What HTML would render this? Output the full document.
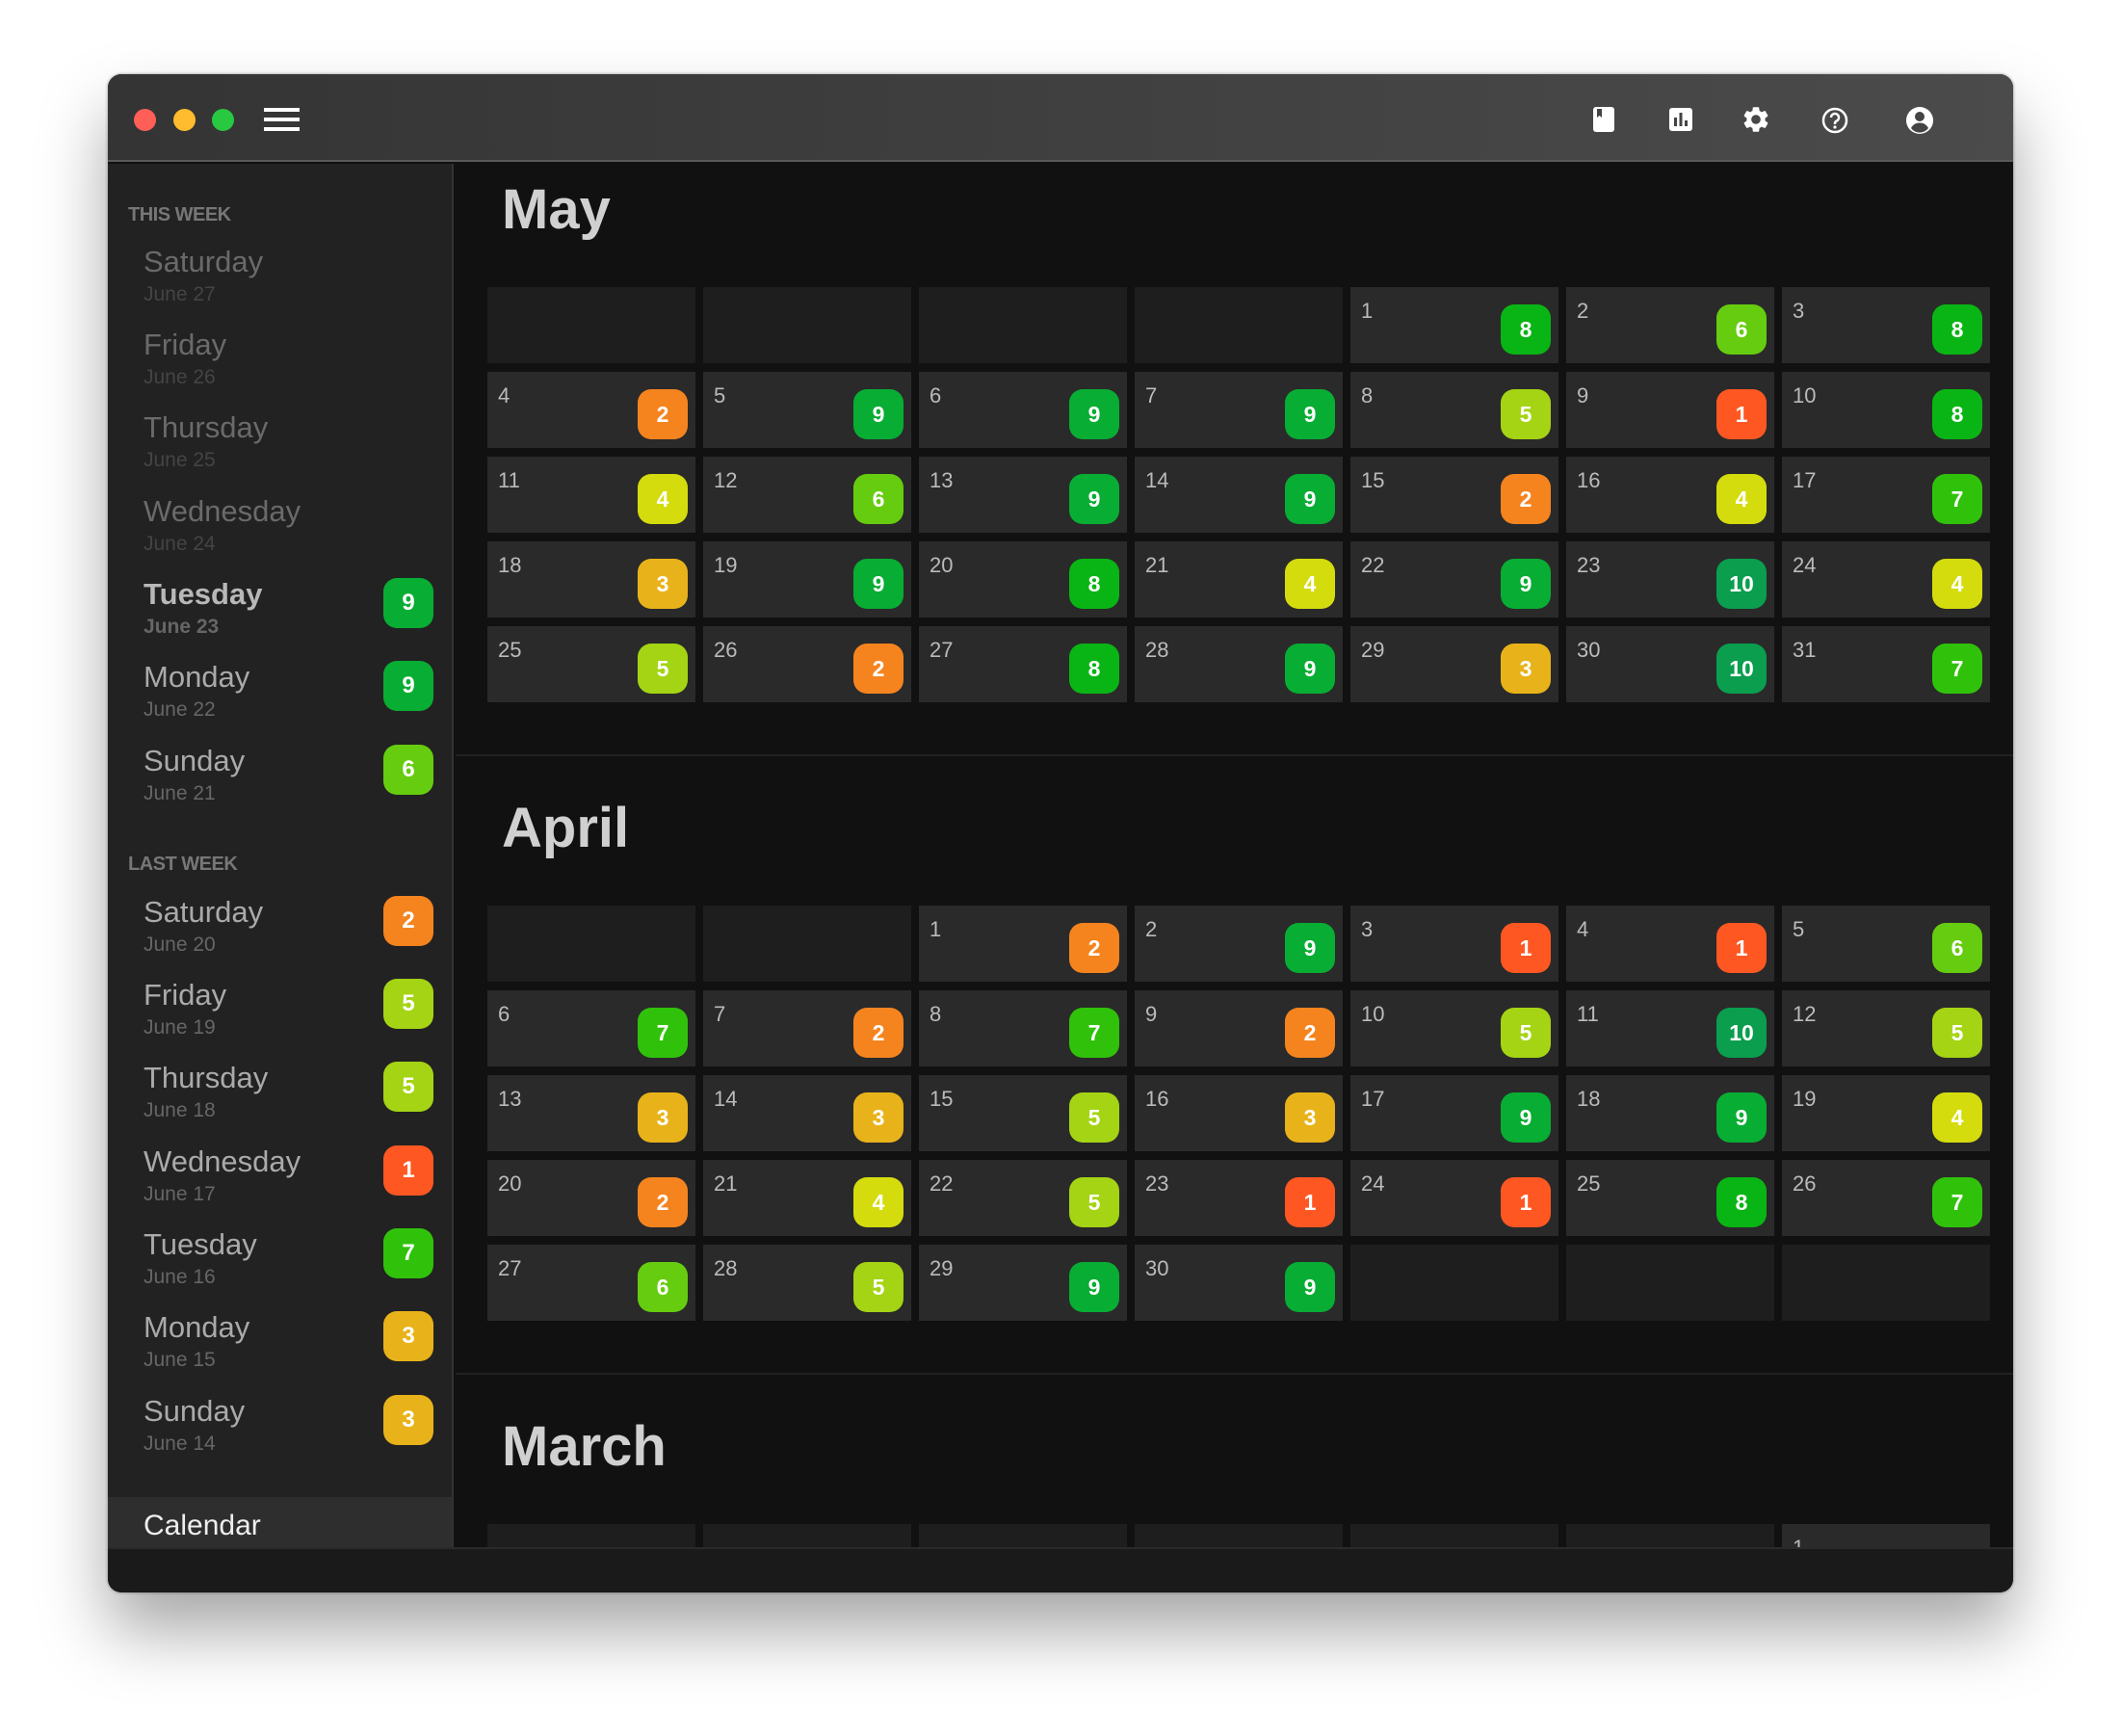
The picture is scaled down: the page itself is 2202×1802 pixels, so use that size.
<!DOCTYPE html>
<html><head><meta charset="utf-8"><style>
*{margin:0;padding:0;box-sizing:border-box}
body{width:2202px;height:1802px;background:#fff;position:relative;overflow:hidden;font-family:"Liberation Sans",sans-serif}
.win{position:absolute;left:112px;top:77px;width:1978px;height:1576px;border-radius:14px;overflow:hidden;background:#111;box-shadow:0 40px 70px rgba(0,0,0,.35),0 0 3px rgba(0,0,0,.4)}
.tb{position:absolute;left:0;top:0;width:100%;height:91px;background:linear-gradient(90deg,#343434,#4b4b4b);border-bottom:2px solid #5a5a5a}
.dot{position:absolute;top:36px;width:23px;height:23px;border-radius:50%}
.hb{position:absolute;left:162px;width:37px;height:4px;background:#fff}
.side{position:absolute;left:0;top:93px;width:359px;height:1436px;background:#222;border-right:2px solid #333}
.lbl{position:absolute;left:21px;font-size:20px;font-weight:bold;color:#777;letter-spacing:-.5px}
.nm{position:absolute;left:37px;font-size:31px;line-height:1;color:#aaa}
.dt{position:absolute;left:37px;font-size:21px;line-height:1;color:#666}
.sb{position:absolute;left:286px;width:52px;height:52px;border-radius:14px;color:#fff;font-weight:bold;font-size:24px;display:flex;align-items:center;justify-content:center}
.cal{position:absolute;left:0;top:1477px;width:357px;height:52px;background:#2e2e2e;color:#eee;font-size:30px;padding:13px 0 0 37px}
.bot{position:absolute;left:0;top:1529px;width:100%;height:47px;background:#1a1a1a;border-top:2px solid #2a2a2a}
.mt{position:absolute;left:409px;font-size:58px;font-weight:bold;color:#d0d0d0;line-height:1}
.hr{position:absolute;left:361px;right:0;height:2px;background:#222}
.g{position:absolute;left:394px;display:grid;grid-template-columns:repeat(7,216px);grid-auto-rows:79px;column-gap:8px;row-gap:9px}
.c{background:#2a2a2a;position:relative}
.e{background:#1e1e1e}
.c span{position:absolute;left:11px;top:14px;font-size:22px;color:#bbb;line-height:1}
.c b{position:absolute;right:8px;top:18px;width:52px;height:52px;border-radius:14px;color:#fff;font-size:23px;display:flex;align-items:center;justify-content:center}
.v1{background:#ff5722}.v2{background:#f5841f}.v3{background:#e8b31a}.v4{background:#d4dc0e}.v5{background:#a4d414}.v6{background:#66cc0f}.v7{background:#30c20a}.v8{background:#09b514}.v9{background:#08ad33}.v10{background:#0a9e4e}
.ic{position:absolute}
</style></head><body>
<div class="win">
<div class="tb">
<div class="dot" style="left:-1px;margin-left:28px;background:#ff5f57"></div>
<div class="dot" style="left:68px;background:#febc2e"></div>
<div class="dot" style="left:108px;background:#28c840"></div>
<div class="hb" style="top:35px"></div><div class="hb" style="top:45px"></div><div class="hb" style="top:55px"></div>
<svg class="ic" style="left:1542px;top:34px" width="22" height="26" viewBox="0 0 22 26"><path d="M3 0H19a3 3 0 0 1 3 3V23a3 3 0 0 1-3 3H3a3 3 0 0 1-3-3V3a3 3 0 0 1 3-3z" fill="#fff"/><path d="M4 2h5v9l-2.5-2-2.5 2z" fill="#444"/></svg>
<svg class="ic" style="left:1621px;top:35px" width="24" height="24" viewBox="0 0 24 24"><rect width="24" height="24" rx="3" fill="#fff"/><rect x="5" y="10" width="3" height="9" fill="#444"/><rect x="10.5" y="5" width="3" height="14" fill="#444"/><rect x="16" y="13" width="3" height="6" fill="#444"/></svg>
<svg class="ic" style="left:1695px;top:31px" width="32" height="32" viewBox="0 0 24 24"><path fill="#fff" d="M19.14 12.94c.04-.3.06-.61.06-.94 0-.32-.02-.64-.07-.94l2.030-1.580a.49.49 0 0 0 .12-.61l-1.92-3.32a.488.488 0 0 0-.59-.22l-2.39.96c-.5-.38-1.030-.7-1.620-.94l-.36-2.54a.484.484 0 0 0-.48-.41h-3.84c-.24 0-.43.17-.47.41l-.36 2.54c-.59.24-1.13.57-1.62.94l-2.39-.96c-.22-.08-.47 0-.59.22L2.74 8.87c-.12.21-.08.47.12.61l2.03 1.58c-.05.3-.09.63-.09.94s.02.64.07.94l-2.03 1.58a.49.49 0 0 0-.12.61l1.92 3.32c.12.22.37.29.59.22l2.39-.96c.5.38 1.03.7 1.62.94l.36 2.54c.05.24.24.41.48.41h3.84c.24 0 .44-.17.47-.41l.36-2.54c.59-.24 1.13-.56 1.62-.94l2.39.96c.22.08.47 0 .59-.22l1.92-3.32c.12-.22.07-.47-.12-.61l-2.01-1.58zM12 15.6c-1.98 0-3.6-1.620-3.6-3.6s1.62-3.6 3.6-3.6 3.6 1.62 3.6 3.6-1.62 3.6-3.6 3.6z"/></svg>
<svg class="ic" style="left:1779px;top:34px" width="28" height="28" viewBox="0 0 28 28"><circle cx="14" cy="14" r="12" fill="none" stroke="#fff" stroke-width="2.5"/><path d="M10 11a4 4 0 1 1 5.5 3.7c-1 .5-1.5 1.2-1.5 2.3v1" fill="none" stroke="#fff" stroke-width="2.5"/><circle cx="14" cy="21" r="1.6" fill="#fff"/></svg>
<svg class="ic" style="left:1866px;top:33px" width="30" height="30" viewBox="0 0 30 30"><circle cx="15" cy="15" r="14" fill="#fff"/><circle cx="15" cy="11" r="5" fill="#444"/><path d="M6 23c2-4 5.5-5.5 9-5.5s7 1.5 9 5.5a11 11 0 0 1-18 0z" fill="#444"/></svg>
</div>
<div class="side">
<div class="lbl" style="top:42px">THIS WEEK</div>
<div class="nm" style="top:86px;color:#6a6a6a">Saturday</div><div class="dt" style="top:125px;color:#444">June 27</div>
<div class="nm" style="top:172px;color:#6a6a6a">Friday</div><div class="dt" style="top:211px;color:#444">June 26</div>
<div class="nm" style="top:258px;color:#6a6a6a">Thursday</div><div class="dt" style="top:297px;color:#444">June 25</div>
<div class="nm" style="top:345px;color:#6a6a6a">Wednesday</div><div class="dt" style="top:384px;color:#444">June 24</div>
<div class="nm" style="top:431px;font-weight:bold;color:#b8b8b8">Tuesday</div><div class="dt" style="top:470px;font-weight:bold">June 23</div><div class="sb v9" style="top:430px">9</div>
<div class="nm" style="top:517px">Monday</div><div class="dt" style="top:556px">June 22</div><div class="sb v9" style="top:516px">9</div>
<div class="nm" style="top:604px">Sunday</div><div class="dt" style="top:643px">June 21</div><div class="sb v6" style="top:603px">6</div>
<div class="lbl" style="top:716px">LAST WEEK</div>
<div class="nm" style="top:761px">Saturday</div><div class="dt" style="top:800px">June 20</div><div class="sb v2" style="top:760px">2</div>
<div class="nm" style="top:847px">Friday</div><div class="dt" style="top:886px">June 19</div><div class="sb v5" style="top:846px">5</div>
<div class="nm" style="top:933px">Thursday</div><div class="dt" style="top:972px">June 18</div><div class="sb v5" style="top:932px">5</div>
<div class="nm" style="top:1020px">Wednesday</div><div class="dt" style="top:1059px">June 17</div><div class="sb v1" style="top:1019px">1</div>
<div class="nm" style="top:1106px">Tuesday</div><div class="dt" style="top:1145px">June 16</div><div class="sb v7" style="top:1105px">7</div>
<div class="nm" style="top:1192px">Monday</div><div class="dt" style="top:1231px">June 15</div><div class="sb v3" style="top:1191px">3</div>
<div class="nm" style="top:1279px">Sunday</div><div class="dt" style="top:1318px">June 14</div><div class="sb v3" style="top:1278px">3</div>
</div>
<div class="cal">Calendar</div>

<div class="mt" style="top:112px">May</div>
<div class="g" style="top:221px">
<div class="c e"></div><div class="c e"></div><div class="c e"></div><div class="c e"></div>
<div class="c"><span>1</span><b class="v8">8</b></div><div class="c"><span>2</span><b class="v6">6</b></div><div class="c"><span>3</span><b class="v8">8</b></div>
<div class="c"><span>4</span><b class="v2">2</b></div><div class="c"><span>5</span><b class="v9">9</b></div><div class="c"><span>6</span><b class="v9">9</b></div><div class="c"><span>7</span><b class="v9">9</b></div><div class="c"><span>8</span><b class="v5">5</b></div><div class="c"><span>9</span><b class="v1">1</b></div><div class="c"><span>10</span><b class="v8">8</b></div>
<div class="c"><span>11</span><b class="v4">4</b></div><div class="c"><span>12</span><b class="v6">6</b></div><div class="c"><span>13</span><b class="v9">9</b></div><div class="c"><span>14</span><b class="v9">9</b></div><div class="c"><span>15</span><b class="v2">2</b></div><div class="c"><span>16</span><b class="v4">4</b></div><div class="c"><span>17</span><b class="v7">7</b></div>
<div class="c"><span>18</span><b class="v3">3</b></div><div class="c"><span>19</span><b class="v9">9</b></div><div class="c"><span>20</span><b class="v8">8</b></div><div class="c"><span>21</span><b class="v4">4</b></div><div class="c"><span>22</span><b class="v9">9</b></div><div class="c"><span>23</span><b class="v10">10</b></div><div class="c"><span>24</span><b class="v4">4</b></div>
<div class="c"><span>25</span><b class="v5">5</b></div><div class="c"><span>26</span><b class="v2">2</b></div><div class="c"><span>27</span><b class="v8">8</b></div><div class="c"><span>28</span><b class="v9">9</b></div><div class="c"><span>29</span><b class="v3">3</b></div><div class="c"><span>30</span><b class="v10">10</b></div><div class="c"><span>31</span><b class="v7">7</b></div>
</div>
<div class="hr" style="top:706px"></div>
<div class="mt" style="top:754px">April</div>
<div class="g" style="top:863px">
<div class="c e"></div><div class="c e"></div>
<div class="c"><span>1</span><b class="v2">2</b></div><div class="c"><span>2</span><b class="v9">9</b></div><div class="c"><span>3</span><b class="v1">1</b></div><div class="c"><span>4</span><b class="v1">1</b></div><div class="c"><span>5</span><b class="v6">6</b></div>
<div class="c"><span>6</span><b class="v7">7</b></div><div class="c"><span>7</span><b class="v2">2</b></div><div class="c"><span>8</span><b class="v7">7</b></div><div class="c"><span>9</span><b class="v2">2</b></div><div class="c"><span>10</span><b class="v5">5</b></div><div class="c"><span>11</span><b class="v10">10</b></div><div class="c"><span>12</span><b class="v5">5</b></div>
<div class="c"><span>13</span><b class="v3">3</b></div><div class="c"><span>14</span><b class="v3">3</b></div><div class="c"><span>15</span><b class="v5">5</b></div><div class="c"><span>16</span><b class="v3">3</b></div><div class="c"><span>17</span><b class="v9">9</b></div><div class="c"><span>18</span><b class="v9">9</b></div><div class="c"><span>19</span><b class="v4">4</b></div>
<div class="c"><span>20</span><b class="v2">2</b></div><div class="c"><span>21</span><b class="v4">4</b></div><div class="c"><span>22</span><b class="v5">5</b></div><div class="c"><span>23</span><b class="v1">1</b></div><div class="c"><span>24</span><b class="v1">1</b></div><div class="c"><span>25</span><b class="v8">8</b></div><div class="c"><span>26</span><b class="v7">7</b></div>
<div class="c"><span>27</span><b class="v6">6</b></div><div class="c"><span>28</span><b class="v5">5</b></div><div class="c"><span>29</span><b class="v9">9</b></div><div class="c"><span>30</span><b class="v9">9</b></div><div class="c e"></div><div class="c e"></div><div class="c e"></div>
</div>
<div class="hr" style="top:1348px"></div>
<div class="mt" style="top:1396px">March</div>
<div class="g" style="top:1505px">
<div class="c e"></div><div class="c e"></div><div class="c e"></div><div class="c e"></div><div class="c e"></div><div class="c e"></div><div class="c"><span>1</span></div>
</div>
<div class="bot"></div>
</div>
</body></html>
